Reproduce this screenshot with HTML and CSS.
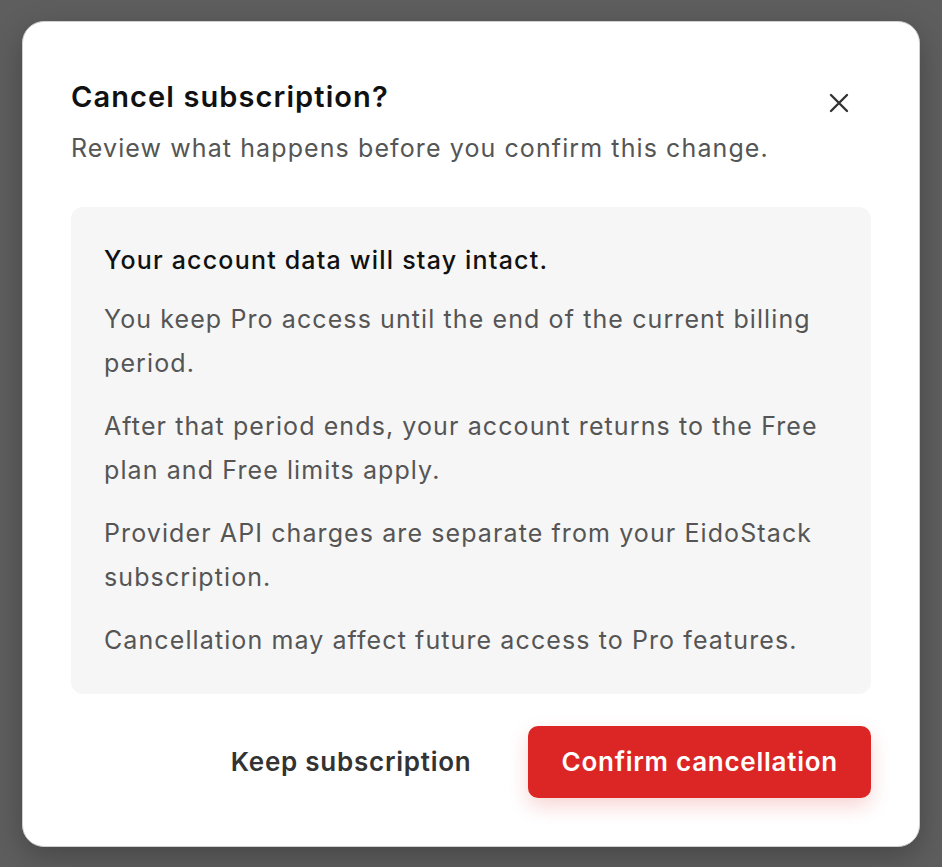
FILE: index.html
```html
<!DOCTYPE html>
<html lang="en">
<head>
    <meta charset="UTF-8">
    <meta name="viewport" content="width=device-width, initial-scale=1.0">
    <title>Cancel subscription</title>
    <link rel="stylesheet" href="styles.css">
</head>
<body>

<div class="overlay">
    <div class="modal" role="dialog" aria-labelledby="modalTitle">
        <div class="modal-header">
            <div class="modal-heading">
                <h2 id="modalTitle" class="modal-title">Cancel subscription?</h2>
                <p class="modal-subtitle">Review what happens before you confirm this change.</p>
            </div>
            <button class="close-button" aria-label="Close">
                <svg width="20" height="20" viewBox="0 0 20 20" fill="none" stroke="currentColor" stroke-width="2.4" stroke-linecap="round">
                    <path d="M2 2L18 18M18 2L2 18"/>
                </svg>
            </button>
        </div>

        <div class="info-box">
            <p class="info-lead">Your account data will stay intact.</p>
            <p>You keep Pro access until the end of the current billing period.</p>
            <p>After that period ends, your account returns to the Free plan and Free limits apply.</p>
            <p>Provider API charges are separate from your EidoStack subscription.</p>
            <p>Cancellation may affect future access to Pro features.</p>
        </div>

        <div class="modal-footer">
            <button class="btn btn-plain">Keep subscription</button>
            <button class="btn btn-danger">Confirm cancellation</button>
        </div>
    </div>
</div>

</body>
</html>
```

FILE: styles.css
```css
body {
    margin: 0;
    padding: 0;
    font-family: Inter, "Noto Sans", Arial, sans-serif;
    background-color: #5e5e5e;
}

.overlay {
    min-height: 100vh;
    display: flex;
    justify-content: center;
    align-items: center;
}

/* Dialog */
.modal {
    width: 898px;
    box-sizing: border-box;
    background-color: #fff;
    border: 1px solid #cfcfcf;
    border-radius: 22px;
    padding: 59px 48px 48px;
    box-shadow: 0 10px 30px rgba(0, 0, 0, 0.25);
}

.modal-header {
    display: flex;
    justify-content: space-between;
    align-items: flex-start;
}

.modal-title {
    margin: 0;
    font-size: 29px;
    line-height: 32px;
    font-weight: 600;
    letter-spacing: 1.1px;
    color: #111;
}

.modal-subtitle {
    margin: 18px 0 0;
    font-size: 25px;
    line-height: 34px;
    letter-spacing: 1.1px;
    color: #555;
}

.close-button {
    width: 44px;
    height: 44px;
    margin-right: 10px;
    padding: 0;
    border: none;
    background: none;
    color: #333;
    display: flex;
    justify-content: center;
    align-items: center;
    cursor: pointer;
}

/* Info panel */
.info-box {
    margin-top: 42px;
    padding: 33px 33px 32px;
    background-color: #f6f6f6;
    border-radius: 12px;
}

.info-box p {
    margin: 19px 0 0;
    font-size: 25px;
    line-height: 44px;
    letter-spacing: 1.1px;
    color: #555;
}

.info-box .info-lead {
    margin: 0;
    line-height: 40px;
    font-weight: 500;
    letter-spacing: 1.2px;
    color: #111;
}

.info-box .info-lead + p {
    margin-top: 17px;
}

/* Footer buttons */
.modal-footer {
    margin-top: 32px;
    display: flex;
    justify-content: flex-end;
    gap: 24px;
}

.btn {
    height: 72px;
    padding: 0 33px;
    border: none;
    border-radius: 10px;
    font-family: inherit;
    font-size: 26px;
    font-weight: 600;
    letter-spacing: 0.75px;
    cursor: pointer;
}

.btn-plain {
    background: none;
    color: #333;
}

.btn-danger {
    background-color: #dc2626;
    color: #fff;
    box-shadow: 0 8px 20px rgba(220, 38, 38, 0.2);
}
```
